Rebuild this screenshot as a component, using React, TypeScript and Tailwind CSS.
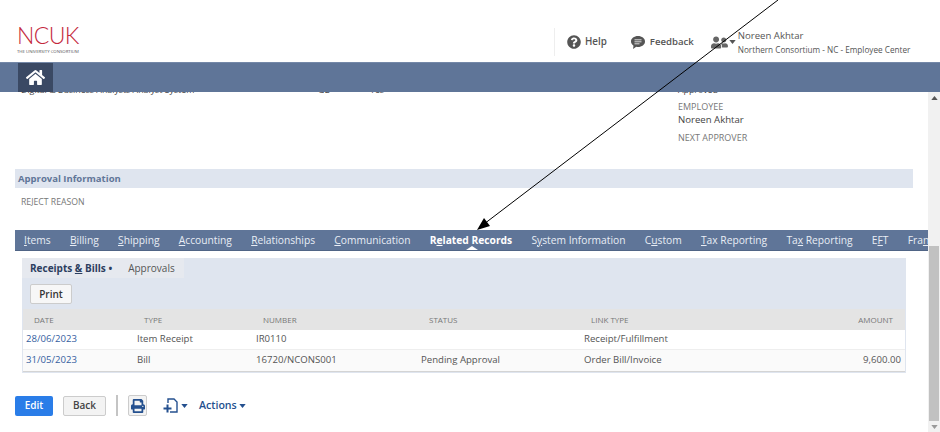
import { FaHome, FaPrint, FaQuestionCircle, FaUserFriends } from "react-icons/fa";

const font = { fontFamily: '"Open Sans", "Noto Sans", sans-serif' };

function Caret({ className }: { className?: string }) {
  return (
    <svg viewBox="0 0 8 5" className={className} width="7" height="4">
      <path d="M0 0h8L4 5z" fill="currentColor" />
    </svg>
  );
}

const tabs: [string, string, string][] = [
  ["", "I", "tems"],
  ["", "B", "illing"],
  ["", "S", "hipping"],
  ["", "A", "ccounting"],
  ["", "R", "elationships"],
  ["", "C", "ommunication"],
  ["R", "e", "lated Records"],
  ["S", "y", "stem Information"],
  ["C", "u", "stom"],
  ["", "T", "ax Reporting"],
  ["Ta", "x", " Reporting"],
  ["E", "F", "T"],
  ["Fra", "n", ""],
];

const gridCols = "grid grid-cols-[111px_119px_165px_163px_1fr]";

function TabBar() {
  return (
    <div className="relative ml-[15px] mt-[22px] h-[21px] w-[913px] overflow-hidden border-b border-[#4f6485] bg-[#5f7598] pl-[9px]">
      <div className="flex h-[20px] items-center gap-[19.25px] whitespace-nowrap pt-[1px] text-[10.25px] text-[#e8edf5]">
        {tabs.map(([a, u, b], i) => (
          <span key={i} className={i === 6 ? "font-bold text-white" : ""}>
            {a}
            <span className="underline">{u}</span>
            {b}
          </span>
        ))}
      </div>
      <span className="absolute bottom-0 left-[451px] h-0 w-0 border-x-[6px] border-b-[4px] border-x-transparent border-b-white" />
    </div>
  );
}

export default function App() {
  return (
    <div style={font} className="relative h-[432px] w-[940px] overflow-hidden bg-white text-[#444]">
      <header className="flex h-[62px] items-end bg-white">
        <div className="mb-[8px] ml-[17px] w-[64px] leading-none">
          <div className="text-[23px] font-light leading-[19px] tracking-[-0.6px] text-[#c4283c]" style={{ fontFamily: "Lato, sans-serif" }}>
            NCUK
          </div>
          <div className="mt-[3px] whitespace-nowrap text-[4.3px] leading-[6px] text-[#555]">THE UNIVERSITY CONSORTIUM</div>
        </div>
        <div className="mb-[6px] ml-auto flex h-[28px] w-[386px] items-center border-l border-[#eee] pl-[12px]">
          <FaQuestionCircle className="text-[14px] text-[#555]" />
          <span className="ml-[4px] text-[9.8px] font-semibold text-[#555]">Help</span>
          <svg viewBox="0 0 14 13" width="14" height="13" className="ml-[24px]">
            <path d="M7 0c3.900 0 7 2.400 7 5.500S10.900 11 7 11c-.6 0-1.100 0-1.700-.2L2 13l.5-3.300C1 8.700 0 7.200 0 5.500 0 2.400 3.100 0 7 0z" fill="#555" />
            <path d="M3.500 3.800h7M3.500 5.800h7M3.500 7.800h5" stroke="#fff" strokeWidth="0.8" />
          </svg>
          <span className="ml-[5px] text-[9.6px] font-semibold text-[#555]">Feedback</span>
          <FaUserFriends className="ml-[17px] text-[17px] text-[#666]" />
          <Caret className="ml-[1px] text-[#555]" />
          <div className="ml-[2px] leading-none">
            <div className="text-[9.6px] leading-[14px] text-[#555]">Noreen Akhtar</div>
            <div className="whitespace-nowrap text-[8.2px] leading-[13px] text-[#555]">Northern Consortium - NC - Employee Center</div>
          </div>
        </div>
      </header>

      <nav className="relative z-10 h-[30px] border-t border-[#7488a8] border-b-[#4f6485] bg-[#5f7598] pl-[18px]">
        <div className="flex h-[29px] w-[35px] items-center justify-center bg-[#3a4964]">
          <FaHome className="text-[19px] text-white" />
        </div>
      </nav>

      <div className="flex h-[340px]">
        <main className="min-w-0 flex-1">
          <div className="relative -mt-[9px] flex h-[14px] items-center text-[8.8px] leading-none text-[#444]">
            <span className="ml-[21px] w-[297px]">Digital &amp; Business Analysts Analyst System</span>
            <span className="w-[52px]">GB</span>
            <span className="w-[308px]">Yes</span>
            <span>Approved</span>
          </div>

          <div className="ml-[678px] mt-[4px] text-[9px] leading-[12px] text-[#777]">EMPLOYEE</div>
          <div className="ml-[678px] text-[9.6px] leading-[14px] text-[#444]">Noreen Akhtar</div>
          <div className="ml-[678px] mt-[5px] text-[9px] leading-[12px] text-[#777]">NEXT APPROVER</div>

          <div className="ml-[15px] mt-[25px] flex h-[19px] w-[898px] items-center bg-[#dfe5ef] pl-[3px] pt-[1px] text-[9.5px] font-bold text-[#5f7598]">
            Approval Information
          </div>
          <div className="ml-[21px] mt-[8px] text-[8.7px] leading-[12px] text-[#777]">REJECT REASON</div>

          <TabBar />

          <section className="ml-[22px] mt-[7px] w-[884px] bg-[#dfe5ef] pb-[1px]">
            <div className="flex h-[20px] w-[162px] items-center bg-[#e6e9ef] pl-[8px] text-[10px]">
              <span className="font-bold text-[#2c3e5f]">
                Receipts <span className="underline">&amp;</span> Bills •
              </span>
              <span className="ml-[16px] text-[#555]">Approvals</span>
            </div>
            <button className="ml-[8px] mt-[6px] block h-[20px] w-[42px] rounded-[2px] border border-[#ccc] bg-[#f7f7f7] text-[10px] font-semibold text-[#333]">
              Print
            </button>
            <div className="mx-[1px] mt-[5px] border-b border-[#d4d4d4]">
              <div className={`${gridCols} h-[21px] items-center bg-[#e4e4e4] text-[8px] text-[#777]`}>
                <span className="pl-[11px]">DATE</span>
                <span className="pl-[10px]">TYPE</span>
                <span className="pl-[10px]">NUMBER</span>
                <span className="pl-[11px]">STATUS</span>
                <div className="flex justify-between pl-[10px] pr-[12px]">
                  <span>LINK TYPE</span>
                  <span>AMOUNT</span>
                </div>
              </div>
              <div className={`${gridCols} h-[20px] items-center border-b border-[#eee] bg-white text-[9.6px] text-[#555]`}>
                <span className="pl-[3px] text-[#35609f]">28/06/2023</span>
                <span className="pl-[3px]">Item Receipt</span>
                <span className="pl-[3px]">IR0110</span>
                <span className="pl-[3px]" />
                <span className="pl-[3px]">Receipt/Fulfillment</span>
              </div>
              <div className={`${gridCols} h-[21px] items-center bg-[#fafafa] text-[9.6px] text-[#555]`}>
                <span className="pl-[3px] text-[#35609f]">31/05/2023</span>
                <span className="pl-[3px]">Bill</span>
                <span className="pl-[3px]">16720/NCONS001</span>
                <span className="pl-[3px]">Pending Approval</span>
                <div className="flex justify-between pl-[3px] pr-[4px]">
                  <span>Order Bill/Invoice</span>
                  <span>9,600.00</span>
                </div>
              </div>
            </div>
          </section>

          <div className="ml-[15px] mt-[22px] flex h-[21px] items-center">
            <button className="h-[20px] w-[38px] rounded-[2px] bg-[#2a7de8] text-[10px] font-semibold text-white">Edit</button>
            <button className="ml-[10px] h-[20px] w-[43px] rounded-[2px] border border-[#ccc] bg-[#f3f3f3] text-[10px] font-semibold text-[#444]">Back</button>
            <span className="ml-[10px] h-[21px] w-[2px] bg-[#c4c4c4]" />
            <button className="ml-[10px] flex h-[21px] w-[19px] items-center justify-center rounded-[2px] border border-[#ccc] bg-[#f3f3f3]">
              <FaPrint className="text-[14px] text-[#24508f]" />
            </button>
            <svg viewBox="0 0 16 15" width="16" height="15" className="ml-[16px] text-[#24508f]">
              <path d="M5 5V1h6l3 3v10H7" fill="none" stroke="currentColor" strokeWidth="1.4" />
              <path d="M3.500 6.500h2v3h3v2h-3v3h-2v-3H.5v-2h3z" fill="currentColor" />
            </svg>
            <Caret className="ml-[2px] text-[#24508f]" />
            <span className="ml-[11px] text-[10.6px] font-semibold text-[#24508f]">Actions</span>
            <Caret className="ml-[2px] text-[#24508f]" />
          </div>
        </main>

        <aside className="flex w-[12px] flex-col items-center bg-[#f1f1f1]">
          <Caret className="mt-[4px] rotate-180 text-[#555]" />
          <div className="mt-[146px] h-[175px] w-[10px] bg-[#c1c1c1]" />
          <Caret className="mt-[4px] text-[#999]" />
        </aside>
      </div>

      <svg viewBox="0 0 940 432" className="pointer-events-none absolute left-0 top-0 z-20 h-[432px] w-[940px]">
        <line x1="778" y1="0" x2="484" y2="224" stroke="#000" strokeWidth="1" />
        <path d="M477 230L484 218L490 226z" fill="#000" />
      </svg>
    </div>
  );
}
